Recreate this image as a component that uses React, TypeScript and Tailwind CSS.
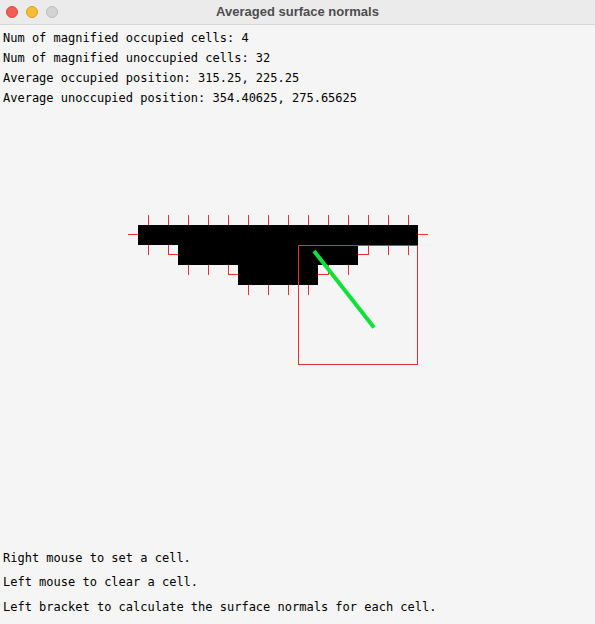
import React from "react";

const CELL = 20;
// rows of occupied cells: [startX, endX, topY]
const rows: [number, number, number][] = [
    [138, 418, 225],
    [178, 358, 245],
    [238, 318, 265],
];

const RED = "#e3303c";

const Normals = () => {
    const lines: [number, number, number, number][] = [];
    // top face ticks of first row
    for (let x = 148; x <= 408; x += CELL) lines.push([x, 215, x, 225]);
    // side ticks of first row
    lines.push([128, 234.5, 138, 234.5]);
    lines.push([418, 234.5, 428, 234.5]);
    // under row 1
    [148, 168, 368, 388, 408].forEach(x => lines.push([x, 245, x, 255]));
    lines.push([168, 254.5, 178, 254.5]);
    lines.push([358, 254.5, 368, 254.5]);
    // under row 2
    [188, 208, 228, 328, 348].forEach(x => lines.push([x, 265, x, 275]));
    lines.push([228, 274.5, 238, 274.5]);
    lines.push([318, 274.5, 328, 274.5]);
    // under row 3
    [248, 268, 288, 308].forEach(x => lines.push([x, 285, x, 295]));

    return (
        <svg width={595} height={270} viewBox="0 110 595 270" className="block shrink-0" shapeRendering="crispEdges">
            {lines.map(([x1, y1, x2, y2], i) => (
                <line key={i} x1={x1 + (x1 === x2 ? 0.5 : 0)} y1={y1} x2={x2 + (x1 === x2 ? 0.5 : 0)} y2={y2} stroke={RED} strokeWidth={1} />
            ))}
            {rows.map(([a, b, y], i) => (
                <rect key={i} x={a} y={y} width={b - a} height={CELL} fill="#000" />
            ))}
            <rect x={298.5} y={245.5} width={119} height={119} fill="none" stroke={RED} strokeWidth={1} />
            <line x1={314} y1={251} x2={374} y2={327.5} stroke="#0fe03a" strokeWidth={4} shapeRendering="auto" />
        </svg>
    );
};

const TitleBar = () => (
    <div className="h-[25px] shrink-0 relative flex items-center justify-center bg-[#ebebeb] border-b border-[#d4d4d4]">
        <div className="absolute left-[6px] top-[6px] flex gap-[8px]">
            <span className="w-[12px] h-[12px] rounded-full bg-[#ee5f57] border border-[#d8483f]"></span>
            <span className="w-[12px] h-[12px] rounded-full bg-[#f5bd2f] border border-[#d9a128]"></span>
            <span className="w-[12px] h-[12px] rounded-full bg-[#d3d3d3] border border-[#bdbdbd]"></span>
        </div>
        <span className="text-[13px] font-bold text-[#4d4d4d] font-['Liberation_Sans',sans-serif]">Averaged surface normals</span>
    </div>
);

const App = () => {
    const stats = [
        "Num of magnified occupied cells: 4",
        "Num of magnified unoccupied cells: 32",
        "Average occupied position: 315.25, 225.25",
        "Average unoccupied position: 354.40625, 275.65625",
    ];
    const help = [
        "Right mouse to set a cell.",
        "Left mouse to clear a cell.",
        "Left bracket to calculate the surface normals for each cell.",
    ];
    return (
        <div className="w-[595px] h-[624px] flex flex-col bg-[#f5f5f5] overflow-hidden">
            <TitleBar />
            <div className="h-[85px] shrink-0 pl-[3px] pt-[3px] text-black text-[12px] leading-[20px] font-['DejaVu_Sans_Mono',monospace]">
                {stats.map(s => <div key={s}>{s}</div>)}
            </div>
            <Normals />
            <div className="flex-1"></div>
            <div className="pl-[3px] pb-[5px] text-black text-[12px] leading-[24.5px] font-['DejaVu_Sans_Mono',monospace]">
                {help.map(s => <div key={s}>{s}</div>)}
            </div>
        </div>
    );
};

export default App;
